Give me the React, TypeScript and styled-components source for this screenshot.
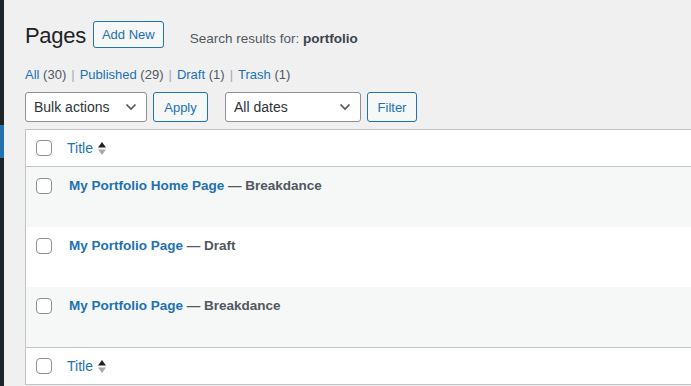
import React from "react";
import styled, { createGlobalStyle } from "styled-components";

const GlobalStyle = createGlobalStyle`
  html, body {
    margin: 0;
    padding: 0;
    background: #f0f0f1;
    overflow: hidden;
  }
  body {
    font-family: "Liberation Sans", Arial, sans-serif;
    color: #3c434a;
    font-size: 13px;
  }
`;

const Shell = styled.div`
  display: flex;
  width: 691px;
  height: 386px;
  overflow: hidden;
`;

const Sidebar = styled.div`
  width: 4px;
  flex: 0 0 4px;
  background: #1d2327;
  display: flex;
  flex-direction: column;
`;

const SidebarCurrent = styled.div`
  margin-top: 125px;
  height: 33px;
  background: #2271b1;
`;

const Content = styled.div`
  flex: 1;
  padding: 21px 0 0 21px;
  display: flex;
  flex-direction: column;
  min-width: 0;
`;

const HeadRow = styled.div`
  display: flex;
  align-items: center;
  height: 27px;
`;

const Heading = styled.h1`
  margin: 0 7px 0 0;
  font-size: 22px;
  font-weight: 400;
  color: #1d2327;
  line-height: 27px;
  padding-top: 2px;
  letter-spacing: -0.3px;
`;

const Button = styled.button<{ $w?: number; $h?: number }>`
  height: ${(p) => (p.$h ? p.$h : 30)}px;
  padding: 0 8px;
  border: 1px solid #2271b1;
  border-radius: 3px;
  background: #f6f7f7;
  color: #2271b1;
  font-family: inherit;
  font-size: 13px;
  line-height: 1;
  ${(p) => (p.$w ? `width: ${p.$w}px;` : "")}
  box-sizing: border-box;
`;

const Subtitle = styled.span`
  margin-left: 26px;
  padding-top: 8px;
  font-size: 13.5px;
  color: #50575e;

  b {
    font-weight: 700;
    color: #3c434a;
  }
`;

const Views = styled.div`
  margin-top: 20px;
  display: flex;
  align-items: center;
  gap: 5px;
  font-size: 13px;
  line-height: 14px;
`;

const ViewLink = styled.a`
  color: #2271b1;
  text-decoration: none;
`;

const Count = styled.span`
  color: #50575e;
`;

const Sep = styled.span`
  color: #a7aaad;
`;

const Filters = styled.div`
  margin-top: 10px;
  display: flex;
  align-items: center;
`;

const Select = styled.div<{ $w: number; $gap: number }>`
  width: ${(p) => p.$w}px;
  height: 30px;
  box-sizing: border-box;
  border: 1px solid #8c8f94;
  border-radius: 3px;
  background: #fff;
  display: flex;
  align-items: center;
  justify-content: space-between;
  padding: 0 9px 0 8px;
  margin-right: 6px;
  font-size: 14px;
  color: #2c3338;
  margin-left: ${(p) => p.$gap}px;
`;

const Table = styled.div`
  margin-top: 7px;
  border: 1px solid #c3c4c7;
  border-right: none;
  background: #fff;
  display: flex;
  flex-direction: column;
`;

const HeadCell = styled.div<{ $top?: boolean }>`
  height: 36px;
  display: flex;
  align-items: center;
  ${(p) => (p.$top ? "border-bottom: 1px solid #c3c4c7;" : "border-top: 1px solid #c3c4c7;")}
`;

const Row = styled.div<{ $alt: boolean }>`
  height: 60px;
  display: flex;
  align-items: flex-start;
  background: ${(p) => (p.$alt ? "#f6f7f7" : "#fff")};
`;

const CheckCell = styled.div<{ $top: number }>`
  width: 41px;
  flex: 0 0 41px;
  display: flex;
  padding-left: 10px;
  box-sizing: border-box;
  padding-top: ${(p) => p.$top}px;
`;

const Check = styled.span`
  width: 16px;
  height: 16px;
  box-sizing: border-box;
  border: 1px solid #8c8f94;
  border-radius: 4px;
  background: #fff;
`;

const SortTitle = styled.a`
  color: #2271b1;
  font-size: 14px;
  text-decoration: none;
  display: flex;
  align-items: center;
  gap: 5px;
`;

const RowTitle = styled.div`
  padding: 10px 0 0 2px;
  font-size: 13.5px;
  font-weight: 700;
  line-height: 18px;
  color: #2271b1;
`;

const PostState = styled.span`
  color: #50575e;
`;

const Chevron = () => (
  <svg width="12" height="8" viewBox="0 0 12 8">
    <path d="M1.5 1.5 L6 6 L10.5 1.5" fill="none" stroke="#50575e" strokeWidth="1.7" />
  </svg>
);

const SortArrows = () => (
  <svg width="8" height="15" viewBox="0 0 8 15">
    <path d="M0 6.5 L4 1 L8 6.5 Z" fill="#1d2327" />
    <path d="M0 8.5 L8 8.5 L4 14 Z" fill="#a7aaad" />
  </svg>
);

const rows = [
  { title: "My Portfolio Home Page", state: "Breakdance" },
  { title: "My Portfolio Page", state: "Draft" },
  { title: "My Portfolio Page", state: "Breakdance" },
];

const views = [
  { label: "All", count: 30 },
  { label: "Published", count: 29 },
  { label: "Draft", count: 1 },
  { label: "Trash", count: 1 },
];

const App = () => {
  return (
    <>
      <GlobalStyle />
      <Shell>
        <Sidebar>
          <SidebarCurrent />
        </Sidebar>
        <Content>
          <HeadRow>
            <Heading>Pages</Heading>
            <Button $h={27}>Add New</Button>
            <Subtitle>
              Search results for: <b>portfolio</b>
            </Subtitle>
          </HeadRow>
          <Views>
            {views.map((v, i) => (
              <React.Fragment key={v.label}>
                {i > 0 && <Sep>|</Sep>}
                <ViewLink>
                  {v.label} <Count>({v.count})</Count>
                </ViewLink>
              </React.Fragment>
            ))}
          </Views>
          <Filters>
            <Select $w={122} $gap={0}>
              Bulk actions <Chevron />
            </Select>
            <Button $w={55}>Apply</Button>
            <Select $w={136} $gap={17}>
              All dates <Chevron />
            </Select>
            <Button $w={50}>Filter</Button>
          </Filters>
          <Table>
            <HeadCell $top>
              <CheckCell $top={0}>
                <Check />
              </CheckCell>
              <SortTitle>
                Title <SortArrows />
              </SortTitle>
            </HeadCell>
            {rows.map((r, i) => (
              <Row key={i} $alt={i % 2 === 0}>
                <CheckCell $top={11}>
                  <Check />
                </CheckCell>
                <RowTitle>
                  {r.title} <PostState>— {r.state}</PostState>
                </RowTitle>
              </Row>
            ))}
            <HeadCell>
              <CheckCell $top={0}>
                <Check />
              </CheckCell>
              <SortTitle>
                Title <SortArrows />
              </SortTitle>
            </HeadCell>
          </Table>
        </Content>
      </Shell>
    </>
  );
};

export default App;
